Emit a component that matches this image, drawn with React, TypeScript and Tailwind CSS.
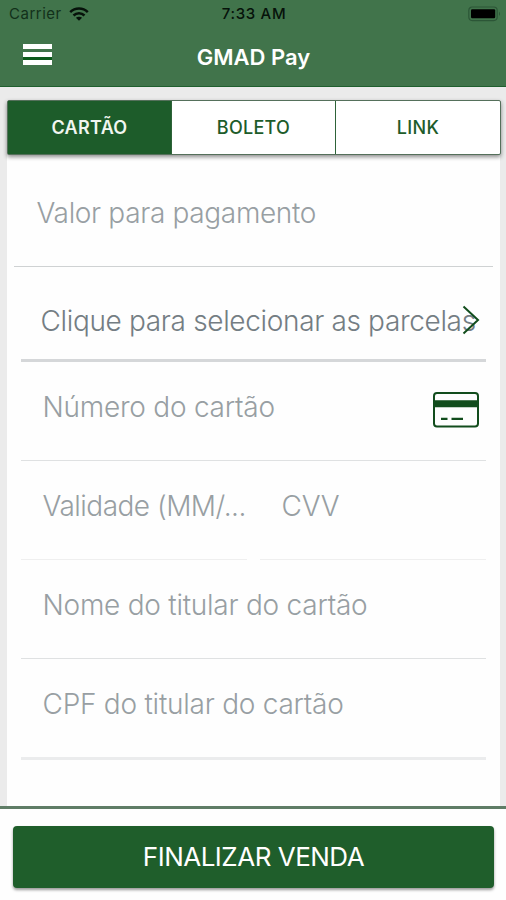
import type { ReactNode } from 'react'

type FieldProps = {
    children: ReactNode
    className?: string
}

const tabs = ['CARTÃO', 'BOLETO', 'LINK']

function WifiIcon() {
    return (
        <svg className="h-[14px] w-5" viewBox="0 0 20 14" fill="none" stroke="#06120a" strokeWidth="2.5">
            <path d="M1.2 5.2C6.1 .3 13.9 .3 18.8 5.2" />
            <path d="M4.5 8.5c3.1-3 7.9-3 11 0" />
            <path d="M10 13.8 6.9 10.8c1.8-1.5 4.4-1.5 6.2 0z" fill="#06120a" stroke="none" />
        </svg>
    )
}

function BatteryIcon() {
    return (
        <svg className="h-4 w-[33px]" viewBox="0 0 33 16" fill="none">
            <rect x=".8" y="1" width="28.4" height="13.6" rx="3.5" stroke="#2c5637" strokeWidth="1.2" />
            <rect x="3" y="3.3" width="24.2" height="9" rx="1.2" fill="#000" />
            <path d="M31 5.8c1.3.7 1.3 3.3 0 4z" fill="#2c5637" />
        </svg>
    )
}

function CardIcon() {
    return (
        <svg className="h-9 w-[46px]" viewBox="0 0 46 36" fill="none" stroke="#124d1d">
            <rect x="1" y="1" width="44" height="33.6" rx="3" strokeWidth="2" />
            <path d="M1 11.7h44" strokeWidth="7" />
            <path d="M8 26.8h6.5M18.5 26.8h11.5" strokeWidth="2.2" />
        </svg>
    )
}

function Field({ children, className = '' }: FieldProps) {
    return (
        <div className={`mx-3.5 flex h-[99px] items-start justify-between border-b border-[#dfe1e2] pt-[25px] pl-[21.5px] text-[28px] leading-10 font-light tracking-[-0.24px] whitespace-nowrap text-[#989fa3] ${className}`}>
            {children}
        </div>
    )
}

export default function App() {
    return (
        <div className="flex h-[900px] w-[506px] flex-col overflow-hidden bg-[#ebebeb] font-['Inter',sans-serif]">
            {/* Header */}
            <header className="h-[87px] flex-none border-b border-[#1f5f2e] bg-[#41744b]">
                <div className="grid h-7 grid-cols-3 items-center pr-[5px] pl-[9px] text-[15px] text-[#06120a]">
                    <div className="flex items-center gap-[7px]">
                        <span className="tracking-[0.5px] text-[#12301a]">Carrier</span>
                        <WifiIcon />
                    </div>
                    <span className="-ml-0.5 text-center font-medium tracking-[0.7px]">7:33 AM</span>
                    <div className="flex justify-end">
                        <BatteryIcon />
                    </div>
                </div>
                <div className="grid h-[58px] grid-cols-[1fr_auto_1fr] items-center pl-px">
                    <button className="ml-[22px] flex w-[29px] flex-col gap-[3px] pb-1.5" aria-label="Menu">
                        <span className="h-[5px] w-full bg-white" />
                        <span className="h-[5px] w-full bg-white" />
                        <span className="h-[5px] w-full bg-white shadow-[0_-3px_0_#0d5a1c]" />
                    </button>
                    <h1 className="text-[22px] font-semibold text-white">GMAD Pay</h1>
                </div>
            </header>

            <main className="flex min-h-0 flex-1 flex-col pt-[13px] pr-[6px] pl-[7px]">
                {/* Tabs */}
                <div className="z-10 grid h-[55px] w-[494px] flex-none grid-cols-[163px_164px_1fr] rounded-[2px] border border-[#55705b] bg-white shadow-[0_2px_4px_rgba(0,0,0,0.45)]">
                    {tabs.map((tab, index) => (
                        <button
                            key={tab}
                            className={`text-[18px] tracking-[0.3px] ${index === 0 ? 'bg-[#1d5c2a] font-semibold text-[#f1f6f1]' : 'border-l border-[#2e6339] font-medium text-[#1d5c2a]'}`}
                        >
                            {tab}
                        </button>
                    ))}
                </div>

                {/* Payment form */}
                <form className="flex-1 bg-[#fefefe]">
                    <div className="mx-[7px] h-[112px] border-b border-[#cfd2d3] pt-[38px] pl-[22.5px] text-[28px] leading-10 font-light tracking-[-0.34px] whitespace-nowrap text-[#989fa3]">
                        <span>Valor para pagamento</span>
                    </div>
                    <div className="mx-3.5 flex h-[95px] items-start border-b-[3px] border-[#d5d7d9] pt-[34px] pl-[19.5px] text-[28px] leading-10 font-light tracking-[-0.34px] whitespace-nowrap text-[#747d83]">
                        <span className="w-[421px]">Clique para selecionar as parcelas</span>
                        <svg className="mt-1 h-[30px] w-[18px] flex-none" viewBox="0 0 18 30" fill="none" stroke="#124d1d" strokeWidth="2">
                            <path d="M1.5 1.5 16 15 1.5 28.5" />
                        </svg>
                    </div>
                    <Field>
                        <span>Número do cartão</span>
                        <span className="mt-[5px] mr-[7px]">
                            <CardIcon />
                        </span>
                    </Field>
                    <div className="flex gap-[13px] px-3.5">
                        <Field className="mx-0! w-[226px] border-[#efefef]! tracking-[-0.52px]!">
                            <span>Validade (MM/...</span>
                        </Field>
                        <Field className="mx-0! flex-1 border-[#efefef]!">
                            <span>CVV</span>
                        </Field>
                    </div>
                    <Field>
                        <span>Nome do titular do cartão</span>
                    </Field>
                    <Field className="h-[101px]! border-b-[3px]! border-[#ebeced]!">
                        <span>CPF do titular do cartão</span>
                    </Field>
                </form>
            </main>

            {/* Submit */}
            <footer className="h-[94px] flex-none border-t-[3px] border-[#5f7d66] bg-[#fefefe] pt-[17px] pr-3 pl-[13px]">
                <button className="h-[62px] w-full rounded-[4px] bg-[#1f5e2b] pb-0.5 text-[26px] tracking-[-0.5px] text-white shadow-[0_2px_3px_rgba(0,0,0,0.4)]">
                    FINALIZAR VENDA
                </button>
            </footer>
        </div>
    )
}
